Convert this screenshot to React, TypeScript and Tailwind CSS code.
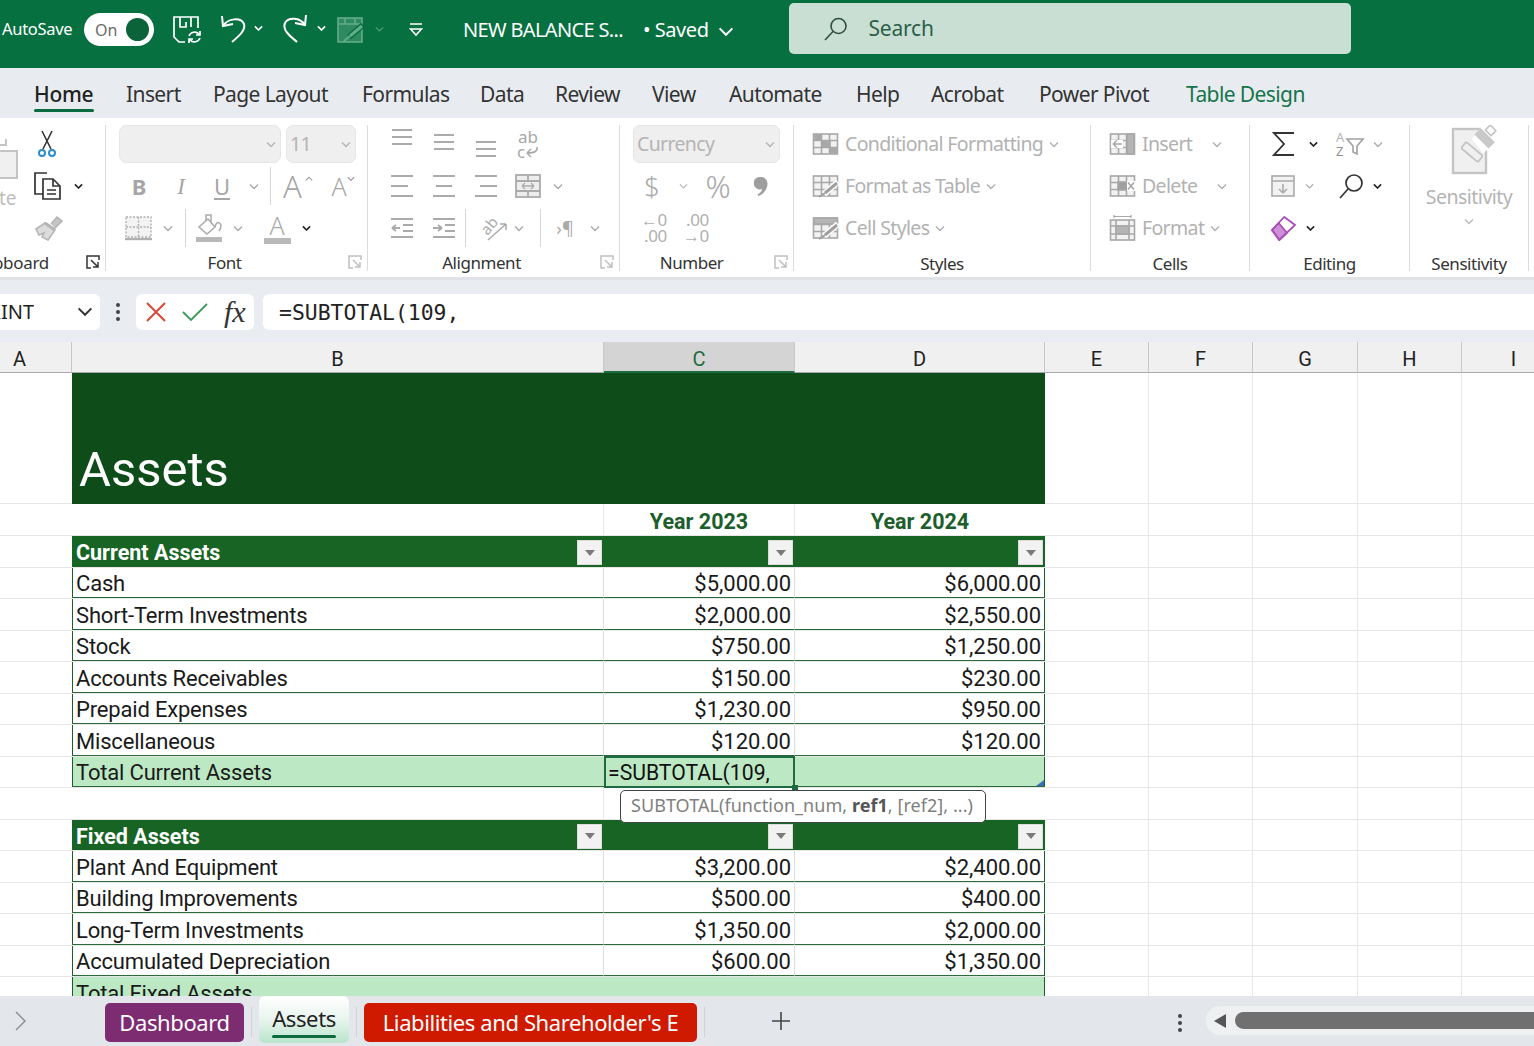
import React from "react";

const G = "#ababab";

function Chev({ c = G, w = 10, sw = 1.4 }: { c?: string; w?: number; sw?: number }) {
  return (
    <svg width={w} height={w * 0.7} viewBox="0 0 10 7" fill="none" className="block">
      <path d="M1 1.5 5 5.5 9 1.5" stroke={c} strokeWidth={sw} />
    </svg>
  );
}
const BlackChev = () => <Chev c="#222" w={9} sw={1.8} />;

function Lines({ ys, xs, w = 24, h = 30, c = G }: { ys: number[]; xs: [number, number][]; w?: number; h?: number; c?: string }) {
  return (
    <svg width={w} height={h} viewBox={`0 0 ${w} ${h}`} fill="none" className="block">
      {ys.map((y, i) => (
        <path key={i} d={`M${xs[i][0]} ${y}H${xs[i][1]}`} stroke={c} strokeWidth={2} />
      ))}
    </svg>
  );
}

const Sep = () => <div className="w-px h-[146px] mt-[7px] bg-[#dcdcdc] shrink-0" />;
const VDiv = () => <div className="w-px h-[38px] bg-[#d8d8d8] shrink-0" />;

function Launcher({ c = "#c0c0c0" }: { c?: string }) {
  return (
    <div className="w-[24px] flex justify-center shrink-0">
      <svg width="14" height="14" viewBox="0 0 14 14" fill="none" stroke={c} strokeWidth="1.5">
        <path d="M13 5V1H1V13H5" />
        <path d="M5 5 12 12M12 7V12H7" />
      </svg>
    </div>
  );
}

function GroupLabel({ text, launcher, c, cls = "" }: { text: string; launcher?: boolean; c?: string; cls?: string }) {
  return (
    <div className={`h-[26px] flex items-center text-[17px] leading-none text-[#333] tracking-[-0.45px] ${cls}`}>
      <div className="flex-1 text-center">{text}</div>
      {launcher && <Launcher c={c} />}
    </div>
  );
}

const Row = ({ children, className = "" }: { children?: React.ReactNode; className?: string }) => (
  <div className={`flex h-[42px] items-center ${className}`}>{children}</div>
);

function Sel({ w, text }: { w: string; text?: string }) {
  return (
    <div className={`${w} h-[38px] rounded-[7px] bg-[#efefef] border border-[#e6e6e6] flex items-center justify-between pl-[3px] pr-[4px] text-[19.5px] text-[#b4b4b4] tracking-[-0.65px]`}>
      <span>{text}</span>
      <Chev c="#b5b5b5" />
    </div>
  );
}

const GridBase = ({ children }: { children?: React.ReactNode }) => (
  <svg width="27" height="24" viewBox="0 0 27 24" fill="none" stroke="#a8a8a8" strokeWidth="1.6" className="block">
    <rect x="1.5" y="2" width="24" height="20" fill="#f2f2f2" />
    <path d="M1.5 8.5H25.5M1.5 15.5H25.5M9.5 2V22M17.5 2V22" />
    {children}
  </svg>
);
const Brush = () => (
  <>
    <path d="M26 8 12 20" stroke="#fff" strokeWidth="6" />
    <path d="M25 9 13 19" stroke="#a0a0a0" strokeWidth="3" />
    <path d="M13 19 7 23" stroke="#a0a0a0" strokeWidth="2" />
  </>
);
const IconCF = () => (
  <GridBase>
    <rect x="3" y="3" width="6" height="5" fill="#a8a8a8" />
    <rect x="10" y="9" width="8" height="6" fill="#a8a8a8" />
    <rect x="18" y="16" width="7" height="5" fill="#a8a8a8" />
  </GridBase>
);
const IconFT = () => <GridBase><Brush /></GridBase>;
const IconCS = () => (
  <GridBase>
    <rect x="2" y="2" width="23" height="6" fill="#b5b5b5" />
    <Brush />
  </GridBase>
);
const IconInsert = () => (
  <GridBase>
    <rect x="2" y="8" width="12" height="8" fill="#fff" stroke="none" />
    <path d="M13 12H4M4 12l4-3.5M4 12l4 3.5" />
    <rect x="18" y="2" width="7" height="20" fill="#b5b5b5" />
  </GridBase>
);
const IconDelete = () => (
  <GridBase>
    <rect x="9" y="8" width="9" height="8" fill="#a0a0a0" />
    <rect x="18" y="7" width="9" height="10" fill="#fff" stroke="none" />
    <path d="M19 8.5 25 15.5M25 8.5 19 15.5" />
  </GridBase>
);
const IconFormat = () => (
  <svg width="27" height="26" viewBox="0 0 27 26" fill="none" stroke="#a8a8a8" strokeWidth="1.6" className="block">
    <path d="M5 1.5H22M5 0V3M22 0V3" strokeWidth="1.2" />
    <rect x="1.5" y="5" width="24" height="20" fill="#f2f2f2" />
    <path d="M1.5 11H25.5M1.5 19H25.5M7 5V25M20 5V25" />
    <rect x="7" y="11" width="13" height="8" fill="#b5b5b5" />
  </svg>
);

function StyleItem({ text, chevClass, icon }: { text: string; chevClass?: string; icon: React.ReactNode }) {
  return (
    <Row>
      <div className="w-[27px] flex justify-center mr-[6px]">{icon}</div>
      <span className="text-[19.5px] text-[#b2b2b2] tracking-[-0.65px] whitespace-nowrap">{text}</span>
      <span className={chevClass ?? "ml-[6px]"}><Chev c="#b0b0b0" /></span>
    </Row>
  );
}

function TitleBar() {
  return (
    <div className="h-[68px] bg-[#077040] flex items-start shrink-0 text-white">
      <span className="text-[16.5px] ml-[2px] mt-[17px] w-[82px] tracking-[-0.3px]">AutoSave</span>
      <div className="mt-[13px] w-[70px] h-[33px] rounded-full bg-white flex items-center justify-between pl-[11px] pr-[5px] text-[16px] text-[#6b6b6b]">
        <span>On</span>
        <span className="w-[23px] h-[23px] rounded-full bg-[#0a6339]" />
      </div>
      <div className="ml-[18px] mt-[15px]">
        <svg width="30" height="30" viewBox="0 0 30 30" fill="none" stroke="#fff" strokeWidth="1.7">
          <path d="M13 27H7L2 22V2H26V13" />
          <path d="M8 2V12H14V7M19 2V12" />
          <path d="M17 21a6 6 0 0 1 10-2l1 1M28 16v4h-4M28 23a6 6 0 0 1-10 2l-1-1M17 28v-4h4" />
        </svg>
      </div>
      <div className="ml-[18px] mt-[13px]">
        <svg width="30" height="32" viewBox="0 0 30 32" fill="none" stroke="#fff" strokeWidth="2">
          <path d="M2 3 3 13 13 11" />
          <path d="M3 13C8 5 21 4 24 11 26 17 19 23 12 29" />
        </svg>
      </div>
      <div className="ml-[4px] mt-[25px]"><Chev c="#fff" w={9} sw={1.8} /></div>
      <div className="ml-[18px] mt-[13px]">
        <svg width="30" height="32" viewBox="0 0 30 32" fill="none" stroke="#fff" strokeWidth="2">
          <path d="M25 2 24 12 14 10" />
          <path d="M24 12C19 4 7 4 4 10 1 17 9 23 16 29" />
        </svg>
      </div>
      <div className="ml-[6px] mt-[25px]"><Chev c="#fff" w={9} sw={1.8} /></div>
      <div className="ml-[10px] mt-[16px]">
        <svg width="28" height="28" viewBox="0 0 28 28" fill="none" stroke="#63ac8a" strokeWidth="1.6">
          <rect x="2" y="2" width="24" height="24" fill="#2f8a60" />
          <path d="M2 8H26M9 2V8M19 2V8" />
          <path d="M27 9 13 21" stroke="#077040" strokeWidth="6" />
          <path d="M26 10 14 20" strokeWidth="3" />
          <path d="M14 20 8 25" strokeWidth="2" />
        </svg>
      </div>
      <div className="ml-[11px] mt-[26px]"><Chev c="#4f9e78" w={9} /></div>
      <div className="ml-[25px] mt-[22px]">
        <svg width="14" height="16" viewBox="0 0 14 16" fill="none" stroke="#fff" strokeWidth="1.6">
          <path d="M1 2H13M1.5 7H12.5L7 13Z" />
        </svg>
      </div>
      <span className="ml-[40px] mt-[15px] text-[20px] tracking-[-0.65px] whitespace-nowrap">NEW BALANCE S...</span>
      <span className="ml-[20px] mt-[15px] text-[20px] tracking-[-0.45px] whitespace-nowrap">• Saved</span>
      <div className="ml-[9px] mt-[26px]"><Chev c="#fff" w={16} sw={1.2} /></div>
      <div className="ml-[55px] mt-[3px] w-[562px] h-[51px] rounded-[5px] bg-[#c9dfd3] flex items-center pl-[34px] text-[#2d5f48]">
        <svg width="26" height="26" viewBox="0 0 26 26" fill="none" stroke="#2d4f3f" strokeWidth="1.6">
          <circle cx="15.5" cy="10" r="7.5" />
          <path d="M10 15.5 2 24" />
        </svg>
        <span className="ml-[20px] text-[21px] tracking-[-0.2px]">Search</span>
      </div>
    </div>
  );
}

function Tabs() {
  const t = "mt-[11px] leading-[30px]";
  return (
    <div className="h-[50px] bg-[#e8ecf0] flex items-start pl-[34px] text-[21px] text-[#333] tracking-[-0.6px] shrink-0 whitespace-nowrap">
      <div className="w-[60px] mr-[32px] flex flex-col mt-[11px]">
        <span className="font-medium text-[#222] leading-[30px] tracking-[-0.3px]">Home</span>
        <span className="h-[3px] rounded bg-[#0b6b40]" />
      </div>
      <span className={`w-[52px] mr-[35px] ${t}`}>Insert</span>
      <span className={`w-[114px] mr-[35px] ${t}`}>Page Layout</span>
      <span className={`w-[87px] mr-[31px] ${t}`}>Formulas</span>
      <span className={`w-[44px] mr-[31px] ${t}`}>Data</span>
      <span className={`w-[65px] mr-[32px] ${t}`}>Review</span>
      <span className={`w-[45px] mr-[32px] ${t}`}>View</span>
      <span className={`w-[95px] mr-[32px] ${t}`}>Automate</span>
      <span className={`w-[44px] mr-[31px] ${t}`}>Help</span>
      <span className={`w-[76px] mr-[32px] ${t}`}>Acrobat</span>
      <span className={`w-[111px] mr-[36px] ${t}`}>Power Pivot</span>
      <span className={`${t} text-[#15744a]`}>Table Design</span>
    </div>
  );
}

function ClipboardGroup() {
  return (
    <div className="w-[105px] flex flex-col shrink-0 mt-[5px]">
      <div className="flex h-[126px]">
        <div className="w-[26px] flex flex-col overflow-hidden">
          <svg width="20" height="44" viewBox="0 0 20 44" fill="none" stroke="#c4c4c4" strokeWidth="2" className="mt-[14px] block">
            <path d="M0 8H6V2" />
            <rect x="-4" y="14" width="21" height="27" fill="#f0f0f0" />
          </svg>
          <span className="text-[19px] leading-[24px] text-[#bdbdbd] -ml-[1px] mt-[5px]">te</span>
        </div>
        <div className="flex flex-col">
          <Row className="pl-[11px]">
            <svg width="20" height="28" viewBox="0 0 20 28" fill="none">
              <path d="M5 1 14 19M15 1 6 19" stroke="#333" strokeWidth="1.6" />
              <circle cx="5" cy="23" r="3" stroke="#2d8ccf" strokeWidth="2" />
              <circle cx="15" cy="23" r="3" stroke="#2d8ccf" strokeWidth="2" />
            </svg>
          </Row>
          <Row className="pl-[7px]">
            <svg width="29" height="28" viewBox="0 0 29 28" fill="none" stroke="#333" strokeWidth="1.7">
              <path d="M10 22H2V1H14" />
              <path d="M10 7H20L27 14V27H10Z" fill="#fff" />
              <path d="M20 7V14H27M14 18H23M14 22H23" />
            </svg>
            <span className="ml-[12px]"><BlackChev /></span>
          </Row>
          <Row className="pl-[9px]">
            <svg width="28" height="26" viewBox="0 0 28 26" fill="none" stroke="#b5b5b5" strokeWidth="1.6">
              <path d="M16 9 22 2 27 6 20 13" fill="#c4c4c4" />
              <path d="M1 14 10 8 20 15 13 25 7 22 9 18 4 20Z" fill="#dcdcdc" />
              <path d="M10 8 20 15" strokeWidth="3" />
            </svg>
          </Row>
        </div>
      </div>
      <div className="h-[26px] flex items-center text-[17px] leading-none text-[#333] tracking-[-0.3px]">
        <div className="w-[49px] overflow-hidden flex justify-end"><span className="shrink-0">Clipboard</span></div>
        <div className="ml-[32px]"><Launcher c="#333" /></div>
      </div>
    </div>
  );
}

function FontGroup() {
  const cell = "flex justify-center text-[#a6a6a6] leading-none";
  return (
    <div className="w-[261px] flex flex-col shrink-0 mt-[5px]">
      <Row className="pl-[13px] gap-[5px]">
        <Sel w="w-[162px]" />
        <Sel w="w-[70px]" text="11" />
      </Row>
      <Row className="pl-[12px]">
        <div className={`${cell} w-[42px] text-[22px] font-bold`}>B</div>
        <div className={`${cell} w-[42px] text-[23px] italic font-['Liberation_Serif']`}>I</div>
        <div className={`${cell} w-[40px] text-[22px] underline underline-offset-[3px]`}>U</div>
        <div className="w-[24px] flex justify-center"><Chev /></div>
        <div className="w-[4px]" />
        <VDiv />
        <div className={`${cell} w-[9px]`} />
        <div className={`${cell} w-[25px] text-[31px] font-light`}>A</div>
        <div className="w-[8px] self-start mt-[11px] rotate-180"><Chev w={8} c="#999" /></div>
        <div className="w-[19px]" />
        <div className={`${cell} w-[14px] text-[25px] font-light`}>A</div>
        <div className="w-[8px] self-start mt-[11px] ml-[1px]"><Chev w={8} c="#999" /></div>
      </Row>
      <Row className="pl-[19px]">
        <svg width="27" height="26" viewBox="0 0 27 26" fill="#f3f3f3" stroke="#b0b0b0" strokeWidth="1.4" strokeDasharray="2 1.5" className="block">
          <rect x="1" y="2" width="25" height="20" />
          <path d="M13.5 2V22M1 12H26" />
          <path d="M0 24H27" strokeDasharray="none" strokeWidth="2.4" />
        </svg>
        <div className="w-[32px] flex justify-center"><Chev /></div>
        <div className="w-[1px]" />
        <VDiv />
        <div className="w-[44px] flex justify-center ml-[1px]">
          <svg width="28" height="30" viewBox="0 0 28 30" fill="none" stroke="#aaa" strokeWidth="1.5" className="block">
            <path d="M4 14 13 6 20 14 12 21Z" />
            <path d="M11 8V2H16V9" />
            <path d="M20 14C21 9 24 8 26 12 26 15 25 17 24 18" />
            <rect x="1" y="24" width="26" height="5" fill="#b9b9b9" stroke="none" />
          </svg>
        </div>
        <div className="w-[14px] flex justify-center"><Chev /></div>
        <div className="w-[58px] flex justify-center ml-[3px]">
          <div className="flex flex-col items-center w-[27px] text-[25px] leading-[25px] text-[#a8a8a8] font-light">
            <span>A</span>
            <span className="w-[27px] h-[6px] bg-[#b9b9b9]" />
          </div>
        </div>
        <span className="-ml-[4px]"><BlackChev /></span>
      </Row>
      <GroupLabel text="Font" launcher />
    </div>
  );
}

function AlignmentGroup() {
  const L = ({ y, x }: { y: number[]; x: [number, number][] }) => <Lines ys={y} xs={x} />;
  const eq: [number, number][] = [[2, 22], [2, 22], [2, 22]];
  const cell = "w-[42px] flex justify-center";
  return (
    <div className="w-[251px] flex flex-col shrink-0 mt-[5px] pl-[13px]">
      <Row>
        <div className={cell}><L y={[1, 8, 15]} x={eq} /></div>
        <div className={cell}><L y={[6, 13, 20]} x={eq} /></div>
        <div className={cell}><L y={[13, 20, 27]} x={eq} /></div>
        <div className={`${cell} text-[17px] leading-[15px] text-[#a8a8a8]`}>
          <div className="flex flex-col items-center">
            <span>ab</span>
            <span className="flex items-center">c
              <svg width="14" height="12" viewBox="0 0 14 12" fill="none" stroke="#a8a8a8" strokeWidth="1.5" className="block">
                <path d="M12 1C13 5 10 7 2 7M2 7l4-4M2 7l4 4" />
              </svg>
            </span>
          </div>
        </div>
      </Row>
      <Row>
        <div className={cell}><L y={[5, 15, 25]} x={[[1, 23], [1, 18], [1, 23]]} /></div>
        <div className={cell}><L y={[5, 15, 25]} x={[[1, 23], [4, 20], [1, 23]]} /></div>
        <div className={cell}><L y={[5, 15, 25]} x={[[1, 23], [6, 23], [1, 23]]} /></div>
        <div className={cell}>
          <svg width="28" height="26" viewBox="0 0 28 26" fill="#ededed" stroke="#aaa" strokeWidth="1.8" className="block">
            <rect x="2" y="2" width="24" height="22" />
            <path d="M2 8H26M2 18H26M14 2V8M14 18V24" />
            <path d="M8 13H20M8 13l3-3M8 13l3 3M20 13l-3-3M20 13l-3 3" strokeWidth="1.3" />
          </svg>
        </div>
        <div className="w-[18px] flex justify-center"><Chev /></div>
      </Row>
      <Row>
        <div className={cell}>
          <svg width="24" height="22" viewBox="0 0 24 22" fill="none" stroke="#aaa" strokeWidth="1.8" className="block"><path d="M1 2H23M13 8H23M13 14H23M1 20H23M2 11H10M2 11l4-3M2 11l4 3" /></svg>
        </div>
        <div className={cell}>
          <svg width="24" height="22" viewBox="0 0 24 22" fill="none" stroke="#aaa" strokeWidth="1.8" className="block"><path d="M1 2H23M13 8H23M13 14H23M1 20H23M1 11H10M10 11l-4-3M10 11l-4 3" /></svg>
        </div>
        <VDiv />
        <div className="w-[40px] flex justify-center ml-[7px]">
          <svg width="30" height="30" viewBox="0 0 30 30" fill="none" stroke="#aaa" strokeWidth="1.5" className="block overflow-visible">
            <path d="M10 27 28 11M28 11h-6M28 11v6" />
            <text x="4" y="19" fontSize="15" fill="#aaa" stroke="none" transform="rotate(-50 11 15)">ab</text>
          </svg>
        </div>
        <div className="w-[12px] flex justify-center"><Chev /></div>
        <div className="w-[15px]" />
        <VDiv />
        <div className="w-[44px] text-center text-[18px] leading-none text-[#aaa] ml-[2px]">›¶</div>
        <div className="w-[16px] flex justify-center"><Chev /></div>
      </Row>
      <GroupLabel text="Alignment" launcher cls="-ml-[13px]" />
    </div>
  );
}

function NumberGroup() {
  return (
    <div className="w-[173px] flex flex-col shrink-0 mt-[5px]">
      <Row className="pl-[13px]"><Sel w="w-[147px]" text="Currency" /></Row>
      <Row className="pl-[20px] text-[#a8a8a8]">
        <span className="w-[24px] text-center text-[27px] leading-none font-light">$</span>
        <span className="ml-[15px] w-[10px]"><Chev c="#bbb" w={9} /></span>
        <span className="ml-[11px] w-[36px] text-center text-[31px] leading-none font-light">%</span>
        <svg width="14" height="19" viewBox="0 0 14 19" fill="#9e9e9e" className="ml-[18px] block">
          <path d="M6.5 0a6.5 6.5 0 0 1 7 7c0 5-4 10-9 12l-1-1.5c3-1.5 4.5-3.5 4.5-5.5A6.2 6.2 0 1 1 6.5 0Z" />
        </svg>
      </Row>
      <Row className="pl-[20px] text-[#b0b0b0] tracking-[-0.3px]">
        <div className="w-[27px] text-[17px] leading-[16px] text-right">←0<br />.00</div>
        <div className="ml-[15px] w-[27px] text-[17px] leading-[16px] text-right">.00<br />→0</div>
      </Row>
      <GroupLabel text="Number" launcher cls="-ml-[6px]" />
    </div>
  );
}

function StylesGroup() {
  return (
    <div className="w-[296px] flex flex-col shrink-0 mt-[5px]">
      <div className="h-[126px] pl-[18px]">
        <StyleItem text="Conditional Formatting" icon={<IconCF />} />
        <StyleItem text="Format as Table" icon={<IconFT />} />
        <StyleItem text="Cell Styles" icon={<IconCS />} />
      </div>
      <GroupLabel text="Styles" cls="pt-[2px]" />
    </div>
  );
}

function CellsGroup() {
  return (
    <div className="w-[158px] flex flex-col shrink-0 mt-[5px]">
      <div className="h-[126px] pl-[18px]">
        <StyleItem text="Insert" chevClass="ml-[20px]" icon={<IconInsert />} />
        <StyleItem text="Delete" chevClass="ml-[20px]" icon={<IconDelete />} />
        <StyleItem text="Format" chevClass="ml-[6px]" icon={<IconFormat />} />
      </div>
      <GroupLabel text="Cells" cls="pt-[2px]" />
    </div>
  );
}

function EditingGroup() {
  return (
    <div className="w-[159px] flex flex-col shrink-0 mt-[5px]">
      <Row className="pl-[22px]">
        <svg width="23" height="26" viewBox="0 0 23 26" fill="none" stroke="#333" strokeWidth="1.8" className="block"><path d="M22 2H2L12 13 2 24H22" /></svg>
        <span className="ml-[14px]"><BlackChev /></span>
        <svg width="30" height="30" viewBox="0 0 30 30" fill="none" stroke="#a0a0a0" strokeWidth="1.6" className="ml-[17px] block">
          <text x="1" y="13" fontSize="13" fill="#b5b5b5" stroke="none">A</text>
          <text x="1" y="27" fontSize="13" fill="#8f8f8f" stroke="none">Z</text>
          <path d="M12 10H28L22 17V25L18 23V17Z" />
        </svg>
        <span className="ml-[8px]"><Chev /></span>
      </Row>
      <Row className="pl-[20px]">
        <svg width="26" height="24" viewBox="0 0 26 24" fill="#f2f2f2" stroke="#aaa" strokeWidth="1.6" className="block">
          <rect x="2" y="2" width="22" height="20" />
          <path d="M2 7H24M13 10V19M13 19l-4-4M13 19l4-4" />
        </svg>
        <span className="ml-[9px]"><Chev w={9} /></span>
        <svg width="28" height="28" viewBox="0 0 28 28" fill="none" stroke="#333" strokeWidth="1.7" className="ml-[24px] block">
          <circle cx="16" cy="11" r="8" />
          <path d="M10 17 2 26" />
        </svg>
        <span className="ml-[7px]"><BlackChev /></span>
      </Row>
      <Row className="pl-[21px]">
        <svg width="25" height="25" viewBox="0 0 25 25" fill="none" stroke="#a94fb8" strokeWidth="1.8" className="block">
          <path d="M1 14 7.7 7 16 17 8.3 24Z" fill="#cf8ed8" />
          <path d="M13.3 1 24 9 8.3 24 1 14Z" />
        </svg>
        <span className="ml-[10px]"><BlackChev /></span>
      </Row>
      <GroupLabel text="Editing" cls="pt-[2px]" />
    </div>
  );
}

function SensitivityGroup() {
  return (
    <div className="w-[118px] flex flex-col shrink-0 mt-[5px]">
      <div className="h-[126px] flex flex-col items-center">
        <svg width="52" height="50" viewBox="0 0 52 50" fill="none" stroke="#c4c4c4" strokeWidth="2.4" className="mt-[2px] ml-[4px] block">
          <rect x="8" y="4" width="33" height="44" fill="#f0f0f0" />
          <path d="M27 14 38 0 52 0 52 18 38 28Z" fill="#fff" stroke="none" />
          <rect x="16" y="23" width="22" height="8" rx="2" transform="rotate(40 27 27)" fill="#f0f0f0" strokeWidth="1.8" />
          <rect x="30" y="9" width="20" height="9" transform="rotate(45 40 13)" fill="#c9c9c9" stroke="none" />
          <rect x="42" y="2" width="8" height="7" transform="rotate(45 46 5)" fill="#fff" strokeWidth="1.6" />
        </svg>
        <span className="text-[19.5px] leading-[24px] text-[#b4b4b4] mt-[10px] tracking-[-0.5px]">Sensitivity</span>
        <span className="mt-[9px]"><Chev c="#bbb" /></span>
      </div>
      <GroupLabel text="Sensitivity" cls="pt-[2px]" />
    </div>
  );
}

function Ribbon() {
  return (
    <div className="h-[162px] bg-white flex shrink-0 border-b-[3px] border-[#dfe3e7]">
      <ClipboardGroup /><Sep />
      <FontGroup /><Sep />
      <AlignmentGroup /><Sep />
      <NumberGroup /><Sep />
      <StylesGroup /><Sep />
      <CellsGroup /><Sep />
      <EditingGroup /><Sep />
      <SensitivityGroup /><Sep />
    </div>
  );
}

function FormulaBar() {
  return (
    <div className="h-[62px] bg-[#e9edf1] flex items-start pt-[14px] shrink-0">
      <div className="w-[100px] h-[36px] rounded-r-[6px] bg-white flex items-center justify-between pr-[7px] overflow-hidden">
        <div className="w-[34px] overflow-hidden flex justify-end text-[20px] text-[#222]"><span className="shrink-0">PRINT</span></div>
        <Chev c="#333" w={16} sw={1.2} />
      </div>
      <div className="w-[36px] h-[36px] flex flex-col items-center justify-center gap-[3px]">
        <span className="w-[4px] h-[4px] rounded-full bg-[#444]" />
        <span className="w-[4px] h-[4px] rounded-full bg-[#444]" />
        <span className="w-[4px] h-[4px] rounded-full bg-[#444]" />
      </div>
      <div className="w-[118px] h-[36px] rounded-[6px] bg-white flex items-center pl-[10px]">
        <svg width="20" height="20" viewBox="0 0 20 20" fill="none" stroke="#d9432f" strokeWidth="1.8"><path d="M1 1 19 19M19 1 1 19" /></svg>
        <svg width="26" height="20" viewBox="0 0 26 20" fill="none" stroke="#3b9a57" strokeWidth="1.8" className="ml-[16px]"><path d="M1 10 9 18 25 2" /></svg>
        <span className="ml-[16px] font-['Liberation_Serif'] italic text-[30px] leading-none text-[#333]">fx</span>
      </div>
      <div className="flex-1 ml-[9px] h-[36px] rounded-l-[6px] bg-white flex items-center pl-[16px] pt-[2px] font-['DejaVu_Sans_Mono'] text-[21.4px] leading-none text-[#222] whitespace-pre">
        =SUBTOTAL(109,
      </div>
    </div>
  );
}

const colB = "w-[532px]";
const colC = "w-[191px]";
const colD = "w-[250px]";

function Head() {
  const h = "h-[31px] flex items-center justify-center pt-[4px] border-r border-[#c9c9c9] text-[20px] leading-none shrink-0";
  const n = "bg-[#f0f0f0] border-b border-b-[#a8a8a8] text-[#222]";
  return (
    <div className="flex shrink-0">
      <div className={`${h} ${n} w-[72px] pr-[32px] overflow-hidden`}>A</div>
      <div className={`${h} ${n} ${colB}`}>B</div>
      <div className={`${h} ${colC} bg-[#d4d4d4] border-b-[2px] border-b-[#1f6b41] text-[#1f6b41]`}>C</div>
      <div className={`${h} ${n} ${colD}`}>D</div>
      <div className={`${h} ${n} w-[104px]`}>E</div>
      <div className={`${h} ${n} w-[104px]`}>F</div>
      <div className={`${h} ${n} w-[105px]`}>G</div>
      <div className={`${h} ${n} w-[104px]`}>H</div>
      <div className={`${h} ${n} w-[104px]`}>I</div>
    </div>
  );
}

function Filler() {
  const c = "h-full border-r border-[#e7e7e7] shrink-0";
  return (
    <>
      <div className={`${c} w-[104px]`} />
      <div className={`${c} w-[104px]`} />
      <div className={`${c} w-[105px]`} />
      <div className={`${c} w-[104px]`} />
      <div className={`${c} w-[104px]`} />
    </>
  );
}

function FilterBtn() {
  return (
    <span className="absolute right-[2px] top-[4px] w-[25px] h-[25px] bg-[#f2f2f2] border border-[#dcdcdc] flex items-center justify-center">
      <span className="w-0 h-0 border-l-[5px] border-r-[5px] border-t-[6px] border-l-transparent border-r-transparent border-t-[#7a7a7a]" />
    </span>
  );
}

function SheetRow({ h, children, line = "border-[#e7e7e7]" }: { h: string; children?: React.ReactNode; line?: string }) {
  return (
    <div className={`flex shrink-0 ${h} border-b ${line}`}>
      <div className="w-[72px] shrink-0" />
      {children}
      <Filler />
    </div>
  );
}

function DataRow({ a, b, c, h = "h-[31.5px]" }: { a: string; b: string; c: string; h?: string }) {
  return (
    <SheetRow h={h}>
      <div className={`${colB} shrink-0 border-l-[1.5px] border-l-[#1d5c2c] border-b border-b-[#2d6a3b] pl-[3px] pt-[4px] flex items-center border-r border-r-[#dedede] tracking-[-0.18px]`}>{a}</div>
      <div className={`${colC} shrink-0 border-b border-b-[#2d6a3b] pr-[3px] pt-[4px] flex items-center justify-end border-r border-r-[#dedede]`}>{b}</div>
      <div className={`${colD} shrink-0 border-b border-b-[#2d6a3b] border-r-[1.5px] border-r-[#1d5c2c] pr-[3px] pt-[4px] flex items-center justify-end`}>{c}</div>
    </SheetRow>
  );
}

function SectionHead({ title }: { title: string }) {
  const c = "relative shrink-0 h-full bg-[#186425] flex items-center font-bold text-white";
  return (
    <SheetRow h="h-[31.5px]">
      <div className={`${c} ${colB} pl-[4px] pt-[3px] text-[21.5px]`}>{title}<FilterBtn /></div>
      <div className={`${c} ${colC}`}><FilterBtn /></div>
      <div className={`${c} ${colD}`}><FilterBtn /></div>
    </SheetRow>
  );
}

function Sheet() {
  return (
    <div className="flex-1 min-h-0 overflow-hidden bg-white font-['Roboto'] text-[22px] leading-none text-[#1a1a1a] relative">
      <Head />
      <SheetRow h="h-[131px]">
        <div className="w-[973px] h-[131px] shrink-0 bg-[#0e4c1a] text-white text-[49px] leading-none pl-[7px] pb-[10px] flex items-end">Assets</div>
      </SheetRow>
      <SheetRow h="h-[32px]">
        <div className={`${colB} shrink-0 border-r border-[#e7e7e7]`} />
        <div className={`${colC} shrink-0 pt-[4px] flex items-center justify-center font-bold text-[21.5px] text-[#1c5e2c] border-r border-[#e7e7e7]`}>Year 2023</div>
        <div className={`${colD} shrink-0 pt-[4px] flex items-center justify-center font-bold text-[21.5px] text-[#1c5e2c]`}>Year 2024</div>
      </SheetRow>
      <SectionHead title="Current Assets" />
      <DataRow a="Cash" b="$5,000.00" c="$6,000.00" />
      <DataRow a="Short-Term Investments" b="$2,000.00" c="$2,550.00" />
      <DataRow a="Stock" b="$750.00" c="$1,250.00" />
      <DataRow a="Accounts Receivables" b="$150.00" c="$230.00" />
      <DataRow a="Prepaid Expenses" b="$1,230.00" c="$950.00" />
      <DataRow a="Miscellaneous" b="$120.00" c="$120.00" />
      <SheetRow h="h-[31.5px]">
        <div className={`${colB} shrink-0 bg-[#bde8c4] border-l-[1.5px] border-l-[#1d5c2c] border-b border-b-[#2d6a3b] pl-[3px] pt-[3px] flex items-center tracking-[-0.18px]`}>Total Current Assets</div>
        <div className={`${colC} shrink-0 bg-[#bde8c4] relative flex items-center`}>
          <div className="absolute inset-x-0 -top-[1px] -bottom-[1px] border-2 border-[#1f6b41] bg-[#bde8c4] pl-[2px] pt-[2px] flex items-center text-[21.2px] text-[#111] z-10">=SUBTOTAL(109,</div>
          <span className="absolute -right-[3px] -bottom-[4px] w-[6px] h-[6px] bg-[#1f6b41] z-20" />
        </div>
        <div className={`${colD} shrink-0 bg-[#bde8c4] border-b border-b-[#2d6a3b] border-r-[1.5px] border-r-[#1d5c2c] relative`}>
          <span className="absolute right-0 bottom-0 w-0 h-0 border-l-[8px] border-b-[6px] border-l-transparent border-b-[#3a6fb5]" />
        </div>
      </SheetRow>
      <SheetRow h="h-[31.5px]">
        <div className={`${colB} shrink-0 border-r border-[#e7e7e7]`} />
        <div className={`${colC} shrink-0 border-r border-[#e7e7e7] relative`}>
          <div className="absolute left-[16px] top-[2px] w-[366px] h-[33px] rounded-[5px] border-[1.5px] border-[#444] bg-white z-30 flex items-center pl-[10px] pb-[3px] font-['Noto_Sans'] text-[18px] tracking-[0.05px] text-[#7f7f7f] whitespace-nowrap">
            SUBTOTAL(function_num,&nbsp;<b className="text-[#555]">ref1</b>, [ref2], ...)
          </div>
        </div>
        <div className={`${colD} shrink-0`} />
      </SheetRow>
      <SectionHead title="Fixed Assets" />
      <DataRow a="Plant And Equipment" b="$3,200.00" c="$2,400.00" />
      <DataRow a="Building Improvements" b="$500.00" c="$400.00" />
      <DataRow a="Long-Term Investments" b="$1,350.00" c="$2,000.00" />
      <DataRow a="Accumulated Depreciation" b="$600.00" c="$1,350.00" />
      <SheetRow h="h-[31.5px]">
        <div className="w-[973px] shrink-0 bg-[#bde8c4] border-l-[1.5px] border-l-[#1d5c2c] border-r-[1.5px] border-r-[#1d5c2c] pl-[3px] pt-[3px] flex items-center tracking-[-0.18px]">Total Fixed Assets</div>
      </SheetRow>
    </div>
  );
}

function SheetTabs() {
  const sep = "w-px h-[30px] bg-[#cfd3d8] shrink-0";
  return (
    <div className="h-[50px] bg-[#e3e7ec] flex shrink-0 text-[22px] tracking-[-0.4px] whitespace-nowrap">
      <div className="w-[105px] flex items-center pl-[15px] shrink-0">
        <svg width="11" height="20" viewBox="0 0 11 20" fill="none" stroke="#8a8a8a" strokeWidth="1.4"><path d="M1 1 10 10 1 19" /></svg>
      </div>
      <div className="w-[139px] h-[39px] mt-[7px] rounded-[5px] bg-[#7d2c72] text-white flex items-center justify-center shrink-0">Dashboard</div>
      <div className={`${sep} mt-[11px] ml-[7px]`} />
      <div className="w-[90px] h-[47px] ml-[7px] rounded-[6px] bg-gradient-to-b from-white via-[#e8f5ee] to-[#b9e4cc] text-[#222] flex flex-col items-center pt-[7px] shrink-0">
        <span className="leading-[30px]">Assets</span>
        <span className="w-[64px] h-[3px] bg-[#0f6b3f] rounded mt-[2px]" />
      </div>
      <div className={`${sep} mt-[11px] ml-[7px]`} />
      <div className="w-[333px] h-[39px] mt-[7px] ml-[7px] rounded-[5px] bg-[#cf1a00] text-white flex items-center justify-center shrink-0">Liabilities and Shareholder's E</div>
      <div className={`${sep} mt-[11px] ml-[7px]`} />
      <div className="ml-[66px] mt-[15px] shrink-0">
        <svg width="20" height="20" viewBox="0 0 20 20" fill="none" stroke="#444" strokeWidth="1.6"><path d="M10 1V19M1 10H19" /></svg>
      </div>
      <div className="ml-[387px] mt-[18px] flex flex-col gap-[3px] shrink-0">
        <span className="w-[4px] h-[4px] rounded-full bg-[#444]" />
        <span className="w-[4px] h-[4px] rounded-full bg-[#444]" />
        <span className="w-[4px] h-[4px] rounded-full bg-[#444]" />
      </div>
      <div className="ml-[24px] mt-[10px] flex-1 h-[29px] rounded-l-[14px] bg-[#eef0f2] flex items-center pl-[8px]">
        <span className="w-0 h-0 border-y-[7px] border-r-[12px] border-y-transparent border-r-[#555]" />
        <span className="ml-[9px] flex-1 h-[17px] rounded-l-[9px] bg-[#707070]" />
      </div>
    </div>
  );
}

export default function App() {
  return (
    <div className="w-[1534px] h-[1046px] overflow-hidden flex flex-col bg-white font-['Noto_Sans',sans-serif]">
      <TitleBar />
      <Tabs />
      <Ribbon />
      <FormulaBar />
      <Sheet />
      <SheetTabs />
    </div>
  );
}
